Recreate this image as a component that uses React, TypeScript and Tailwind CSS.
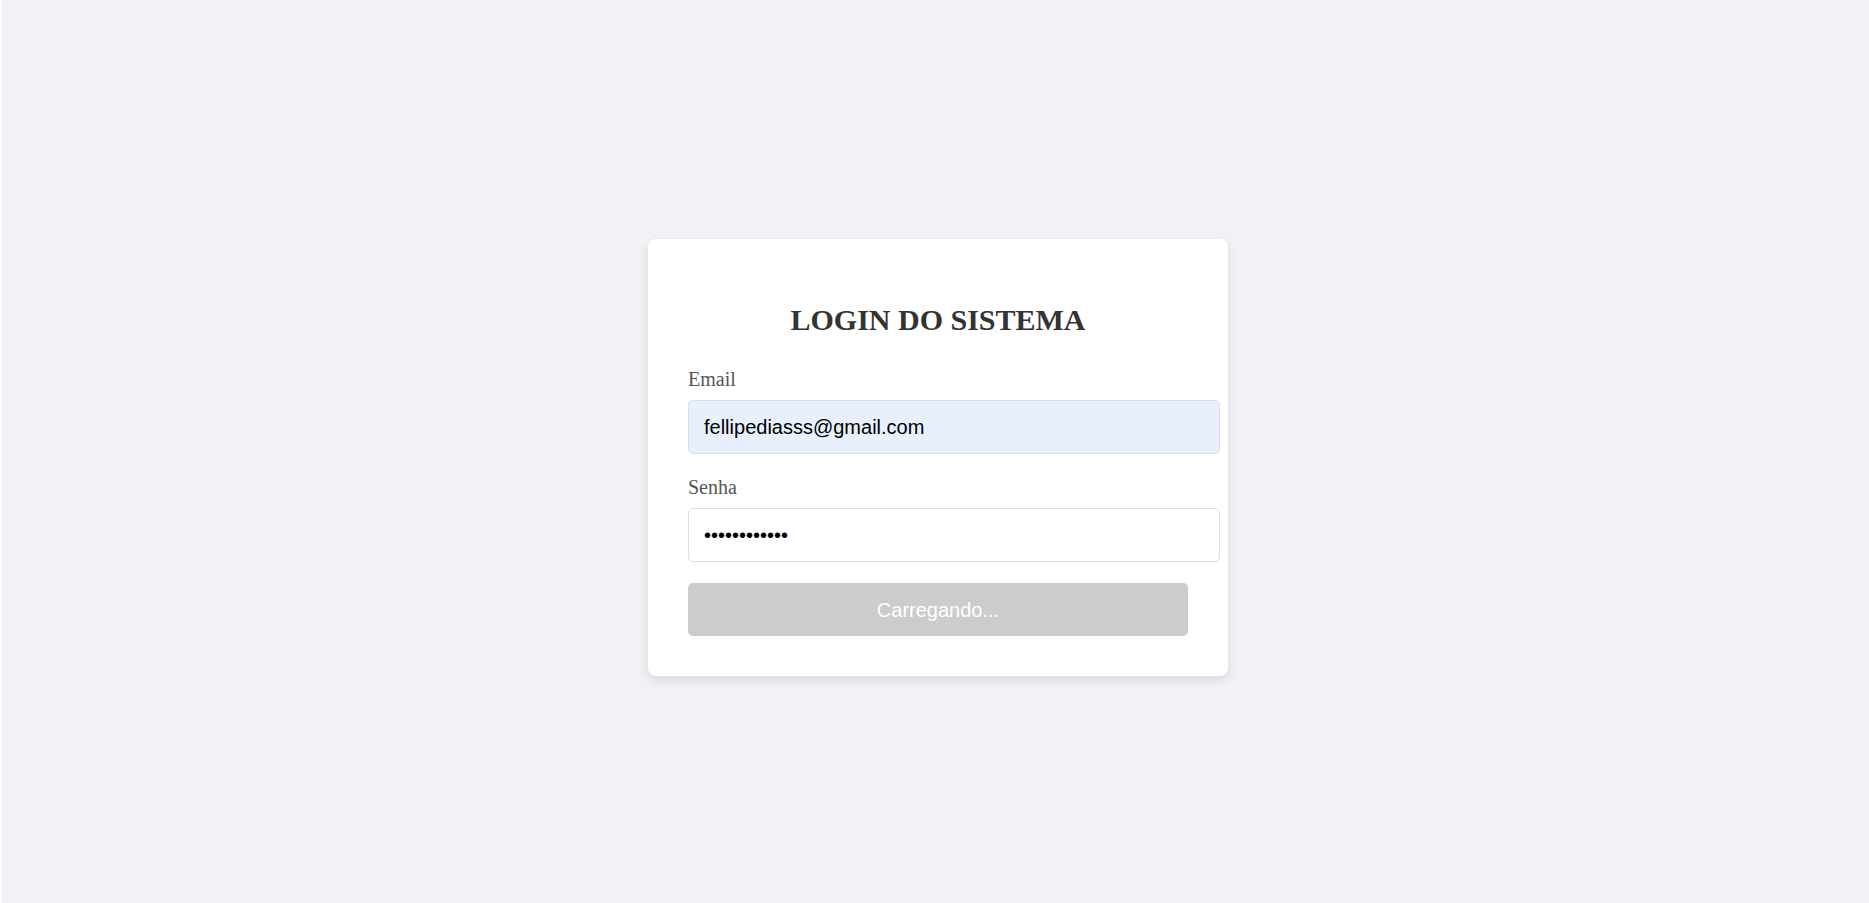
import React from "react";

export default function App() {
  return (
    <div className="w-full h-[903px] bg-white flex">
      <div className="ml-[2px] flex-1 h-[903px] bg-[#f0f2f5] flex justify-center items-center pl-[5px] pt-[12px]">
        <div className="w-[580px] h-[437px] box-border bg-white rounded-[8px] shadow-[0_4px_12px_rgba(0,0,0,0.1)] px-[40px] pt-[40px]">
          <h2 className="mt-[24px] mb-[31px] text-center text-[30px] font-bold leading-[34px] text-[#333333] font-['Liberation_Serif','Times_New_Roman',serif]">
            LOGIN DO SISTEMA
          </h2>
          <label className="block text-[20px] leading-[23px] text-[#555555] mb-[9px] font-['Liberation_Serif','Times_New_Roman',serif]">
            Email
          </label>
          <input
            type="email"
            readOnly
            value="fellipediasss@gmail.com"
            className="block w-[532px] h-[54px] box-border border border-[#dddddd] rounded-[5px] bg-[#e8f0fe] px-[15px] text-[20px] text-black outline-none font-['Liberation_Sans',Arial,sans-serif]"
          />
          <label className="block mt-[22px] text-[20px] leading-[23px] text-[#555555] mb-[9px] font-['Liberation_Serif','Times_New_Roman',serif]">
            Senha
          </label>
          <input
            type="password"
            readOnly
            value="abcdefghijkl"
            className="block w-[532px] h-[54px] box-border border border-[#dddddd] rounded-[5px] bg-white px-[15px] text-[20px] text-black outline-none font-['Liberation_Sans',Arial,sans-serif]"
          />
          <button
            disabled
            className="block mt-[21px] w-[500px] h-[53px] rounded-[5px] bg-[#cccccc] text-white text-[20px] font-['Liberation_Sans',Arial,sans-serif]"
          >
            Carregando...
          </button>
        </div>
      </div>
    </div>
  );
}
